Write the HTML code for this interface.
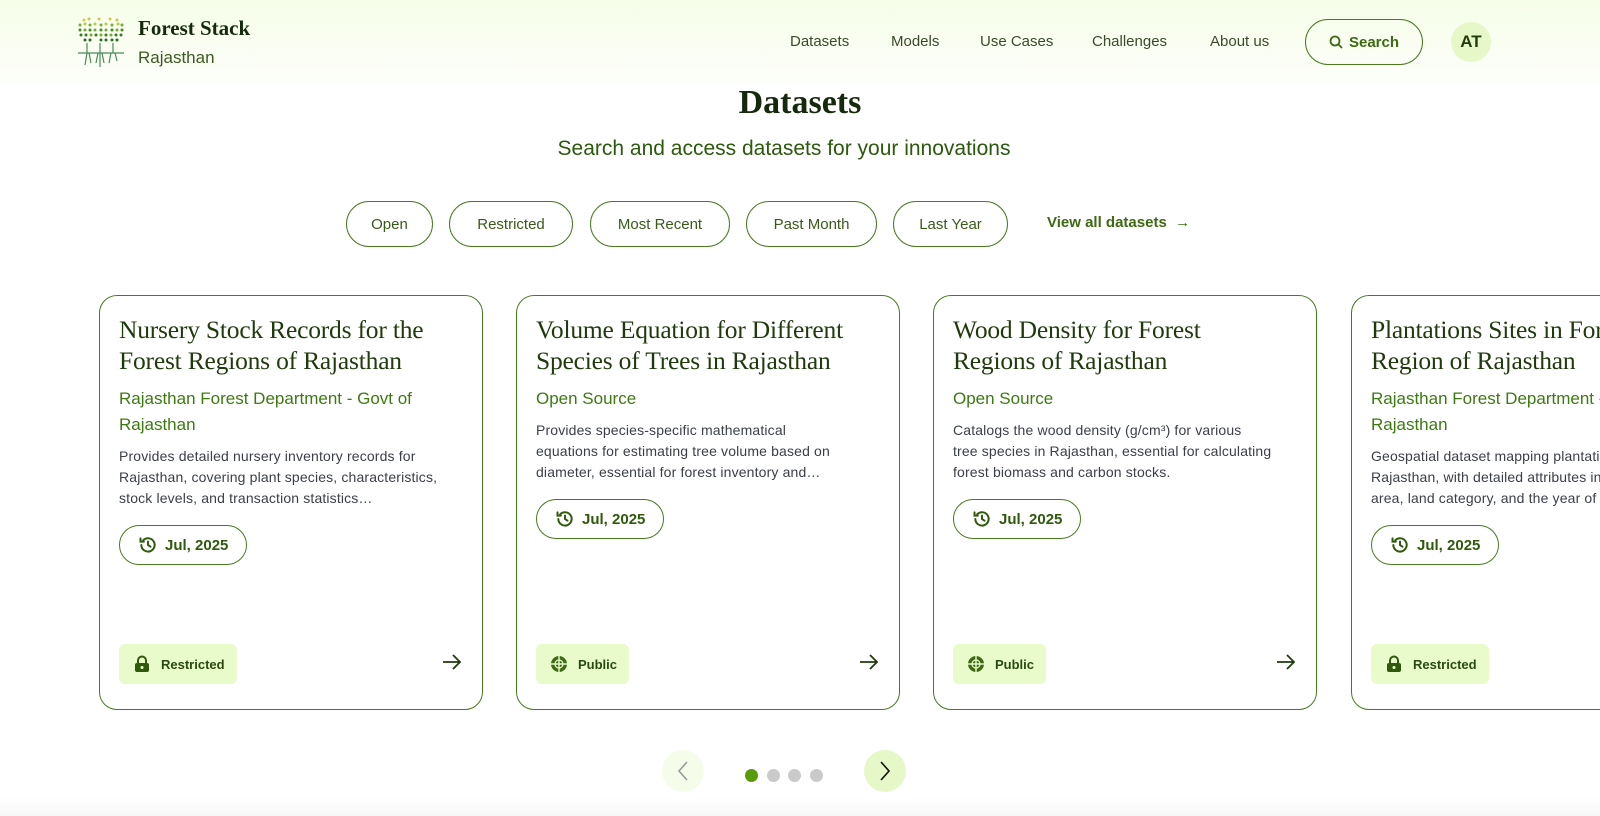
<!DOCTYPE html>
<html><head><meta charset="utf-8"><style>
*{box-sizing:border-box;margin:0;padding:0}
html,body{width:1600px;height:816px;overflow:hidden}
body{background:#fff;font-family:"Liberation Sans",sans-serif}
#w{position:relative;width:1600px;height:816px;overflow:hidden}
.hdr{position:absolute;left:0;top:0;width:1600px;height:84px;background:linear-gradient(#f6fde8,#fdfffa)}
.logo-t{position:absolute;left:138px;top:16px;font-family:"Liberation Serif",serif;font-weight:bold;font-size:21px;color:#152a0c}
.logo-s{position:absolute;left:138px;top:48px;font-size:17px;color:#3d5a1f}
.nav a{position:absolute;top:33px;font-size:15px;color:#3a4a2a;text-decoration:none}
.sbtn{position:absolute;left:1305px;top:19px;width:118px;height:46px;border:1.5px solid #4a7a1f;border-radius:23px;color:#3d6a12;font-weight:bold;font-size:15px;display:flex;align-items:center;justify-content:center;gap:6px}
.av{position:absolute;left:1451px;top:22px;width:40px;height:40px;border-radius:50%;background:#e6f8c8;color:#1f3a0c;font-weight:bold;font-size:17px;display:flex;align-items:center;justify-content:center}
h1{position:absolute;left:0;width:1600px;top:84px;text-align:center;font-family:"Liberation Serif",serif;font-size:34px;color:#152a0c}
.sub{position:absolute;left:0;width:1568px;top:137px;text-align:center;font-size:21px;color:#2a5a0c}
.chip{position:absolute;top:201px;height:46px;border:1.5px solid #4a7a1f;border-radius:23px;font-size:15px;color:#3a5a1a;display:flex;align-items:center;justify-content:center}
.va{position:absolute;left:1047px;top:214px;font-size:15px;font-weight:bold;color:#3d6a12}
.card{position:absolute;top:295px;width:384px;height:415px;border:1.3px solid #4a7a1f;border-radius:18px;padding:18px 19px;overflow:hidden}
.card h3{font-family:"Liberation Serif",serif;font-weight:normal;font-size:25.5px;line-height:31px;color:#1f3a0c;white-space:nowrap;letter-spacing:-0.2px}
.card .src{margin-top:10px;font-size:17px;line-height:26px;color:#3d7a12;white-space:nowrap}
.card p{margin-top:8px;font-size:14px;line-height:21px;color:#3a3f48;white-space:nowrap;letter-spacing:0.15px}
.date{display:inline-flex;align-items:center;gap:7px;margin-top:16px;height:40px;padding:0 18px;border:1.3px solid #4a7a1f;border-radius:20px;font-weight:bold;font-size:15px;color:#2f5a0c}
.badge{position:absolute;left:19px;top:348px;height:40px;padding:0 12px 0 14px;background:#eafbcb;border-radius:6px;display:flex;align-items:center;gap:10px;font-size:13px;font-weight:bold;color:#2a4a12}
.arr{position:absolute;right:20px;top:358px}
.pbtn{position:absolute;top:750px;width:42px;height:42px;border-radius:50%;display:flex;align-items:center;justify-content:center}
.dot{position:absolute;top:769px;width:13px;height:13px;border-radius:50%;background:#cacaca}
</style></head><body><div id="w">
<div class="hdr"></div>
<svg style="position:absolute;left:76px;top:15px" width="50" height="54" viewBox="0 0 50 54">
<g fill="#7aa83a">
<circle cx="8" cy="5" r="1.5" fill="#d8c84a"/><circle cx="13" cy="4" r="1.5" fill="#c9c84a"/><circle cx="23" cy="4" r="1.5" fill="#d8c84a"/><circle cx="34" cy="4" r="1.5" fill="#d8c84a"/><circle cx="41" cy="5" r="1.5" fill="#c9c84a"/>
<circle cx="4" cy="10" r="1.5"/><circle cx="9" cy="9" r="1.5" fill="#b8c84a"/><circle cx="14" cy="10" r="1.5"/><circle cx="19" cy="9" r="1.5" fill="#b8c84a"/><circle cx="25" cy="10" r="1.5"/><circle cx="30" cy="9" r="1.5" fill="#b8c84a"/><circle cx="36" cy="10" r="1.5"/><circle cx="42" cy="9" r="1.5" fill="#b8c84a"/><circle cx="46" cy="10" r="1.5"/>
<circle cx="4" cy="15" r="1.5" fill="#4a8a2a"/><circle cx="9" cy="15" r="1.5"/><circle cx="14" cy="15" r="1.5" fill="#4a8a2a"/><circle cx="19" cy="15" r="1.5"/><circle cx="25" cy="15" r="1.5" fill="#4a8a2a"/><circle cx="30" cy="15" r="1.5"/><circle cx="36" cy="15" r="1.5" fill="#4a8a2a"/><circle cx="41" cy="15" r="1.5"/><circle cx="46" cy="15" r="1.5" fill="#4a8a2a"/>
<circle cx="5" cy="20" r="1.5" fill="#3a7a2a"/><circle cx="10" cy="20" r="1.5" fill="#3a7a2a"/><circle cx="15" cy="20" r="1.5"/><circle cx="20" cy="20" r="1.5" fill="#3a7a2a"/><circle cx="25" cy="20" r="1.5"/><circle cx="30" cy="20" r="1.5" fill="#3a7a2a"/><circle cx="35" cy="20" r="1.5"/><circle cx="40" cy="20" r="1.5" fill="#3a7a2a"/><circle cx="45" cy="20" r="1.5" fill="#3a7a2a"/>
<circle cx="9" cy="25" r="1.5" fill="#2a6a2a"/><circle cx="14" cy="25" r="1.5" fill="#2a6a2a"/><circle cx="25" cy="25" r="1.5" fill="#2a6a2a"/><circle cx="30" cy="25" r="1.5" fill="#2a6a2a"/><circle cx="36" cy="25" r="1.5" fill="#2a6a2a"/><circle cx="41" cy="25" r="1.5" fill="#2a6a2a"/>
</g>
<g stroke="#4a8a5a" stroke-width="1.2" fill="none"><path d="M11 28V38M24 28V38M37 28V38M2 38H48M11 38l-2 12M13 38l2 10M24 38v14M22 38l-2 10M26 38l2 10M35 38l-2 10M39 38l2 8"/></g>
</svg>
<div class="logo-t">Forest Stack</div>
<div class="logo-s">Rajasthan</div>
<div class="nav"><a style="left:790px">Datasets</a><a style="left:891px">Models</a><a style="left:980px">Use Cases</a><a style="left:1092px">Challenges</a><a style="left:1210px">About us</a></div>
<div class="sbtn"><svg width="14" height="14" viewBox="0 0 14 14" fill="none" stroke="#3d6a12" stroke-width="1.8"><circle cx="6" cy="6" r="4.5"/><path d="M9.5 9.5L13 13"/></svg>Search</div>
<div class="av">AT</div>
<h1>Datasets</h1>
<div class="sub">Search and access datasets for your innovations</div>
<div class="chip" style="left:346px;width:87px">Open</div>
<div class="chip" style="left:449px;width:124px">Restricted</div>
<div class="chip" style="left:590px;width:140px">Most Recent</div>
<div class="chip" style="left:746px;width:131px">Past Month</div>
<div class="chip" style="left:893px;width:115px">Last Year</div>
<div class="va">View all datasets &nbsp;<span style="font-weight:normal">→</span></div>

<div class="card" style="left:99px"><h3>Nursery Stock Records for the<br>Forest Regions of Rajasthan</h3><div class="src">Rajasthan Forest Department - Govt of<br>Rajasthan</div><p>Provides detailed nursery inventory records for<br>Rajasthan, covering plant species, characteristics,<br>stock levels, and transaction statistics…</p><div class="date">§</div><div class="badge">L<span>Restricted</span></div><div class="arr">A</div></div>
<div class="card" style="left:516px"><h3>Volume Equation for Different<br>Species of Trees in Rajasthan</h3><div class="src">Open Source</div><p>Provides species-specific mathematical<br>equations for estimating tree volume based on<br>diameter, essential for forest inventory and…</p><div class="date">§</div><div class="badge">G<span>Public</span></div><div class="arr">A</div></div>
<div class="card" style="left:933px"><h3>Wood Density for Forest<br>Regions of Rajasthan</h3><div class="src">Open Source</div><p>Catalogs the wood density (g/cm³) for various<br>tree species in Rajasthan, essential for calculating<br>forest biomass and carbon stocks.</p><div class="date">§</div><div class="badge">G<span>Public</span></div><div class="arr">A</div></div>
<div class="card" style="left:1351px"><h3>Plantations Sites in Forest<br>Region of Rajasthan</h3><div class="src">Rajasthan Forest Department - Govt of<br>Rajasthan</div><p>Geospatial dataset mapping plantation sites in<br>Rajasthan, with detailed attributes including<br>area, land category, and the year of plantation.</p><div class="date">§</div><div class="badge">L<span>Restricted</span></div><div class="arr">A</div></div>

<div class="pbtn" style="left:662px;background:#f5fdea"><svg width="14" height="22" viewBox="0 0 14 22" fill="none" stroke="#999" stroke-width="1.6"><path d="M11 2L3 11l8 9"/></svg></div>
<div class="dot" style="left:745px;background:#5a9a0c"></div><div class="dot" style="left:767px"></div><div class="dot" style="left:788px"></div><div class="dot" style="left:810px"></div>
<div class="pbtn" style="left:864px;background:#e6f8c8"><svg width="14" height="22" viewBox="0 0 14 22" fill="none" stroke="#111" stroke-width="1.6"><path d="M3 2l8 9-8 9"/></svg></div>
<div style="position:absolute;left:0;top:797px;width:1600px;height:19px;background:linear-gradient(#fff,#f7f7f7)"></div>
</div>
<script>
var hist='<svg width="20" height="20" viewBox="0 0 24 24" fill="none" stroke="#2f5a0c" stroke-width="2.4" stroke-linecap="round"><path d="M4 12a8 8 0 1 0 2.3-5.7"/><path d="M3 4v4h4"/><path d="M12 8v4l3 2"/></svg>Jul, 2025';
var lock='<svg width="18" height="18" viewBox="0 0 18 18"><path d="M5 8V5.5a4 4 0 0 1 8 0V8" fill="none" stroke="#2f5a0c" stroke-width="2"/><rect x="2" y="8" width="14" height="9" rx="2" fill="#2f5a0c"/><circle cx="9" cy="12.5" r="1.5" fill="#eafbcb"/></svg>';
var glob='<svg width="18" height="18" viewBox="0 0 18 18" fill="#3d6a12"><circle cx="9" cy="9" r="8"/><path d="M9 1v16M1 9h16" stroke="#eafbcb" stroke-width="1.4"/><circle cx="9" cy="9" r="4" fill="none" stroke="#eafbcb" stroke-width="1.2"/></svg>';
var arr='<svg width="20" height="16" viewBox="0 0 20 16" fill="none" stroke="#1f3a0c" stroke-width="1.8"><path d="M1 8h17M11 1l7 7-7 7"/></svg>';
document.querySelectorAll('.date').forEach(e=>e.innerHTML=hist);
document.querySelectorAll('.arr').forEach(e=>e.innerHTML=arr);
document.querySelectorAll('.badge').forEach(e=>{var t=e.firstChild;t.replaceWith(document.createRange().createContextualFragment(t.textContent=='L'?lock:glob));});
</script>
</body></html>
